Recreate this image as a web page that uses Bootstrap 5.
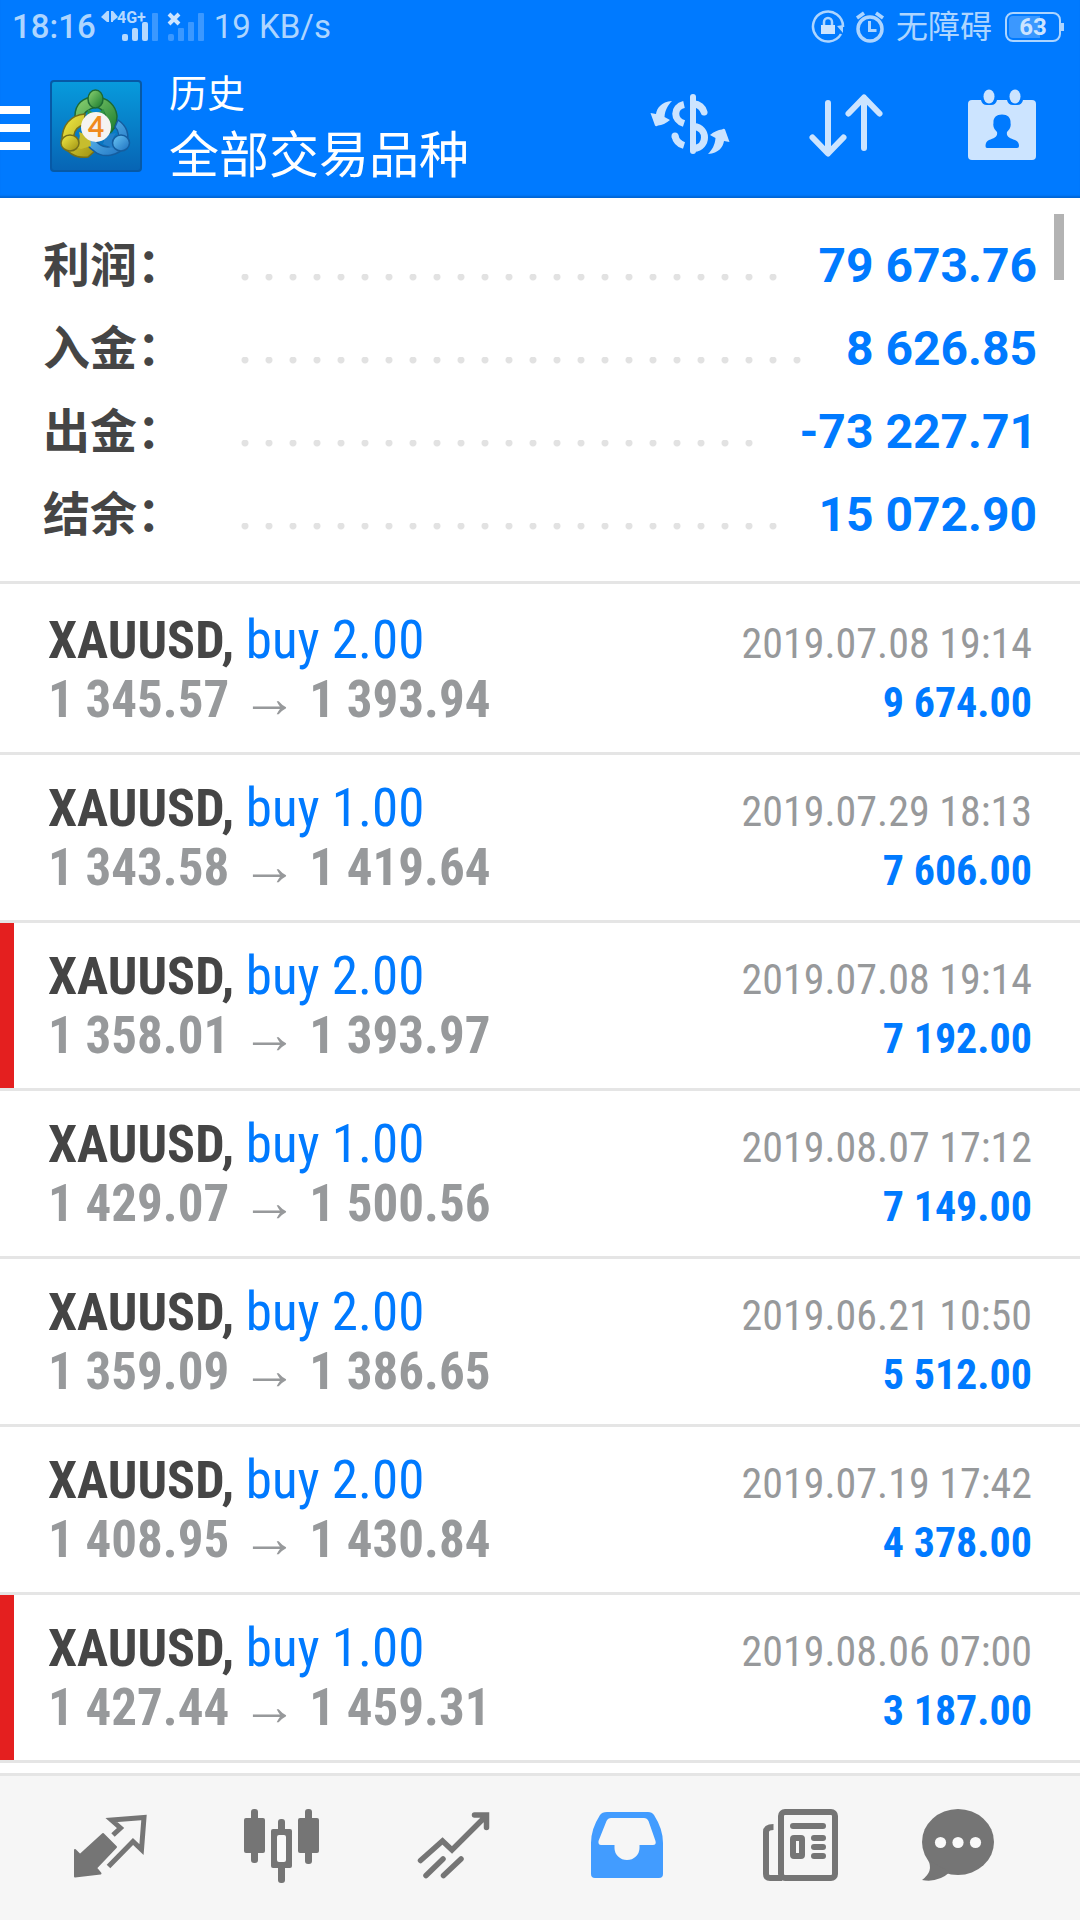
<!DOCTYPE html>
<html lang="zh-CN">
<head>
<meta charset="utf-8">
<meta name="viewport" content="width=device-width, initial-scale=1">
<title>历史</title>
<link href="https://cdn.jsdelivr.net/npm/bootstrap@5.3.0/dist/css/bootstrap.min.css" rel="stylesheet">
<style>
:root { --app-blue: #007aff; --line: #e5e5e5; --ink: #454545; --muted: #97999b; }
body { font-family: Roboto, "Noto Sans CJK SC", sans-serif; background: #fff; }
svg { display: block; }
.app { height: 100vh; }
.top-area { background: var(--app-blue); box-shadow: inset 0 -3px 2px -1px #0066d6; color: #fff; }
.status { height: 54px; color: #add5ff; font-size: 33px; line-height: 54px; padding: 0 16px 0 12px; }
.status .net { line-height: 52px; margin-left: 8px; }
.status .mode { font-size: 32px; line-height: 52px; margin: 0 13px 0 9px; }
.cell-text { font: 700 16px Roboto, sans-serif; }
.battery { width: 56px; height: 30px; border: 2px solid #add5ff; border-radius: 8px; font-size: 24px; line-height: 26px; font-weight: 700; background: linear-gradient(90deg, #3b98ff 64%, transparent 64%) content-box; padding: 2px; color: #cce4ff; }
.battery span { display: block; margin-top: -2px; }
.battery-tip { width: 3px; height: 8px; background: #add5ff; }
.app-bar { height: 144px; }
.menu-btn { width: 30px; height: 44px; margin-top: 4px; }
.menu-btn i { height: 8px; background: #fff; }
.bare { background: none; border: 0; padding: 0; }
.logo { margin-left: 20px; }
.title-box { line-height: 1; padding-top: 15px; margin-left: 27px; }
.title-sub { font-size: 38px; line-height: 50px; }
.title-main { font-size: 50px; line-height: 74px; }
.tool { width: 156px; height: 144px; }
.summary { padding: 26px 43px 25px; border-bottom: 3px solid var(--line); }
.sum-row { height: 83px; line-height: 83px; }
.sum-row dt { width: 190px; font-size: 47px; font-weight: 700; color: var(--ink); }
.sum-row dd { margin: 0; font-size: 48px; font-weight: 700; color: var(--app-blue); }
.dots { height: 7px; margin: 24px 32px 0 0; background: radial-gradient(circle at 12px 3px, #e2e2e2 3px, transparent 4px) 0 0 / 24px 7px repeat-x; }
.scroll-thumb { width: 10px; height: 66px; top: 16px; right: 16px; background: #b3b3b3; }
.deals { padding-top: 3px; font-family: "Roboto Condensed", Roboto, sans-serif; }
.deal { padding: 24px 48px 23px; border-bottom: 3px solid var(--line); line-height: 59px; }
.deal.flagged { box-shadow: inset 14px 0 0 #e41f1f; }
.deal-line { height: 59px; }
.sym { font-size: 52px; font-weight: 700; color: var(--ink); margin-right: 8px; }
.side { font-size: 53px; color: var(--app-blue); }
.price { font-size: 51px; font-weight: 700; color: var(--muted); }
.arrow { font: 700 56px/1 "Liberation Sans", sans-serif; margin: 0 12px; color: var(--muted); }
.when { font-size: 42px; color: var(--muted); }
.gain { font-size: 42px; font-weight: 700; color: var(--app-blue); }
.tabs { height: 147px; border-top: 3px solid var(--line); background: #f6f6f6; padding: 0 24px; color: #757575; }
.tabs a { color: inherit; }
.tabs a.active { color: #429cff; }
.tabs svg { width: 100%; height: 144px; }
</style>
<script src="https://cdn.jsdelivr.net/npm/bootstrap@5.3.0/dist/js/bootstrap.bundle.min.js"></script>
</head>
<body>
<div class="app d-flex flex-column overflow-hidden">
  <header class="top-area flex-shrink-0">
    <div class="status d-flex align-items-center">
      <span class="fw-medium">18:16</span>
      <svg width="110" height="54" viewBox="96 0 110 54" fill="#b5d9ff">
        <path d="M101 17l6-6v6h0v5zM107 11h2v11h-2zM111 11h2v11h-2zM113 11l5 6-5 4z"/>
        <text class="cell-text" x="117" y="23">4G+</text>
        <rect x="122" y="34" width="6" height="7" rx="2"/><rect x="132" y="28" width="6" height="13" rx="2"/><rect x="142" y="22" width="6" height="19" rx="2"/>
        <g fill="#3b98ff"><rect x="152" y="13" width="6" height="28" rx="1"/><rect x="168" y="34" width="6" height="7" rx="2"/><rect x="178" y="28" width="6" height="13" rx="1"/><rect x="188" y="22" width="6" height="19" rx="1"/><rect x="198" y="13" width="6" height="28" rx="1"/></g>
        <path d="M169 14l10 10M179 14l-10 10" stroke="#cce4ff" stroke-width="4"/>
      </svg>
      <span class="net">19 KB/s</span>
      <svg class="ms-auto" width="76" height="54" viewBox="811 0 76 54" fill="none" stroke="#add5ff">
        <path d="M841 34a15 15 0 1 1 2-7" stroke-width="2.500"/>
        <path d="M837 26l6-1v8z" fill="#add5ff" stroke="none"/>
        <rect x="821" y="25" width="14" height="9" fill="#cce4ff" stroke="none"/><path d="M824 25v-3a4 4 0 0 1 8 0v3" stroke-width="2.5"/>
        <circle cx="870" cy="29" r="12" stroke-width="3.5"/><path d="M869.500 21v9.500h7" stroke-width="3"/>
        <path d="M857 18l7-5M883 18l-7-5" stroke-width="3.500"/>
      </svg>
      <span class="mode">无障碍</span>
      <div class="battery text-center"><span>63</span></div><i class="battery-tip"></i>
    </div>
    <div class="app-bar d-flex align-items-center">
      <button class="menu-btn bare d-flex flex-column justify-content-between" aria-label="菜单"><i class="w-100"></i><i class="w-100"></i><i class="w-100"></i></button>
      <svg class="logo flex-shrink-0" width="92" height="92" viewBox="0 0 92 92">
        <defs>
          <linearGradient id="bg" x2="0" y2="1"><stop stop-color="#079bdd"/><stop offset="1" stop-color="#0764b4"/></linearGradient>
          <linearGradient id="gr" x2="1" y2="1"><stop stop-color="#8fd473"/><stop offset="1" stop-color="#15782c"/></linearGradient>
          <linearGradient id="ye" x2="1" y2="1"><stop stop-color="#f4ec45"/><stop offset="1" stop-color="#9c8f12"/></linearGradient>
          <linearGradient id="bl" x2="1" y2="1"><stop stop-color="#6cc8f5"/><stop offset="1" stop-color="#1b6fc0"/></linearGradient>
        </defs>
        <rect x="1" y="1" width="90" height="90" rx="3" fill="url(#bg)" stroke="#0659a6" stroke-width="2"/>
        <g stroke-width="1.500">
          <path d="M25 36C25 24 33 17 45 17C58 17 66 26 67 36C67 46 63 52 57 55L54 48C59 40 55 29 46 27C38 29 33 33 32 39L25 41Z" fill="url(#gr)" stroke="#1d6a34"/>
          <path d="M35 34C20 35 12 46 12 60C14 72 26 79 38 77L46 70L40 64C30 69 22 64 24 55C25 49 29 46 34 45Z" fill="url(#ye)" stroke="#746f1a"/>
          <path d="M68 40C77 46 80 55 76 66C68 76 53 79 44 71C38 68 37 63 37 59L46 61C52 68 60 69 66 63C70 57 69 51 65 47Z" fill="url(#bl)" stroke="#155d9f"/>
          <path d="M38 29Q45 36 54 29L55 37H37Z" fill="#2f9445" stroke="none"/>
          <path d="M24 66Q32 60 29 52L40 56L41 66L31 69Z" fill="#c7bd2e" stroke="none"/>
          <path d="M65 69Q60 60 66 53L56 55L53 64Z" fill="#237fc9" stroke="none"/>
          <ellipse cx="45.500" cy="19" rx="7.500" ry="9" fill="url(#gr)" stroke="#1d6a34"/>
          <ellipse cx="20" cy="63" rx="9" ry="8" fill="url(#ye)" stroke="#746f1a"/>
          <ellipse cx="71" cy="63" rx="8.500" ry="8" fill="url(#bl)" stroke="#155d9f"/>
        </g>
        <circle cx="46" cy="47" r="15" fill="#f5f3f2"/>
        <text x="46" y="57" text-anchor="middle" font-family="Lato, sans-serif" font-weight="700" font-size="28" fill="#f08a1c">4</text>
      </svg>
      <div class="title-box align-self-start">
        <div class="title-sub">历史</div>
        <h1 class="title-main fw-normal m-0">全部交易品种</h1>
      </div>
      <div class="d-flex ms-auto">
        <button class="tool bare" aria-label="货币"><svg viewBox="612 54 156 144" width="156" height="144" fill="#cce4ff">
          <path d="M693 97v54" stroke="#cce4ff" stroke-width="6" stroke-linecap="round"/>
          <g fill="none" stroke="#cce4ff" stroke-width="7"><path d="M684 104.500C673 107 673 120 684 123.500"/><path d="M675 136C676 141 679 144 684 145.500" /><path d="M694 104C699 104 703 108 704 112" stroke-linecap="round"/><path d="M694 126.500C708 128 708 147 694 148.500"/></g>
          <circle cx="675" cy="136" r="3.500"/>
          <path id="swoop" d="M672 101C661 102 657 108 656 114L650.500 113L655 125.500Q656 127 658 125.500Q664 125 670 120L664.500 117C665 110 668 105 672 101Z"/>
          <use href="#swoop" transform="rotate(180 690 127.500)"/>
        </svg></button>
        <button class="tool bare" aria-label="排序"><svg viewBox="768 54 156 144" width="156" height="144" fill="none" stroke="#cce4ff" stroke-width="6" stroke-linecap="round" stroke-linejoin="round"><path d="M828 103v50M812.500 137.500L828 153.500L843.500 137.500M864 148V98M848.500 113.500L864 97.500L879.500 113.500"/></svg></button>
        <button class="tool bare" aria-label="日期"><svg viewBox="924 54 156 144" width="156" height="144" fill="#cce4ff">
          <rect x="968" y="100" width="68" height="60" rx="4"/>
          <path d="M981 98v2q1 5 6 5h4q5 0 6-5v-2zM1007 98v2q1 5 6 5h4q5 0 6-5v-2z" fill="#007aff"/>
          <ellipse cx="989" cy="96.500" rx="5.500" ry="7"/><ellipse cx="1015" cy="96.500" rx="5.500" ry="7"/>
          <path d="M1002 114.500C1008 114.500 1011 118 1010.500 123C1011.500 127 1009 130 1007 132C1006 137 1010 138 1015 140Q1019 141.500 1019 146Q1019 148 1017 148H987Q985.500 148 985.500 146Q985.500 141.500 989 140C994 138 998 137 997 132C995 130 992.500 127 993.500 123C993 118 996 114.500 1002 114.500Z" fill="#007aff"/>
        </svg></button>
      </div>
    </div>
  </header>

  <main class="flex-grow-1 overflow-hidden position-relative">
    <dl class="summary m-0">
      <div class="sum-row d-flex align-items-center"><dt>利润：</dt><div class="dots flex-grow-1"></div><dd>79 673.76</dd></div>
      <div class="sum-row d-flex align-items-center"><dt>入金：</dt><div class="dots flex-grow-1"></div><dd>8 626.85</dd></div>
      <div class="sum-row d-flex align-items-center"><dt>出金：</dt><div class="dots flex-grow-1"></div><dd>-73 227.71</dd></div>
      <div class="sum-row d-flex align-items-center"><dt>结余：</dt><div class="dots flex-grow-1"></div><dd>15 072.90</dd></div>
    </dl>
    <div class="scroll-thumb position-absolute"></div>
    <ul class="deals list-unstyled m-0">
      <li class="deal">
        <div class="deal-line d-flex justify-content-between align-items-baseline"><div><span class="sym">XAUUSD,</span> <span class="side">buy 2.00</span></div><time class="when">2019.07.08 19:14</time></div>
        <div class="deal-line d-flex justify-content-between align-items-baseline"><div class="price">1 345.57<span class="arrow">→</span>1 393.94</div><span class="gain">9 674.00</span></div>
      </li>
      <li class="deal">
        <div class="deal-line d-flex justify-content-between align-items-baseline"><div><span class="sym">XAUUSD,</span> <span class="side">buy 1.00</span></div><time class="when">2019.07.29 18:13</time></div>
        <div class="deal-line d-flex justify-content-between align-items-baseline"><div class="price">1 343.58<span class="arrow">→</span>1 419.64</div><span class="gain">7 606.00</span></div>
      </li>
      <li class="deal flagged">
        <div class="deal-line d-flex justify-content-between align-items-baseline"><div><span class="sym">XAUUSD,</span> <span class="side">buy 2.00</span></div><time class="when">2019.07.08 19:14</time></div>
        <div class="deal-line d-flex justify-content-between align-items-baseline"><div class="price">1 358.01<span class="arrow">→</span>1 393.97</div><span class="gain">7 192.00</span></div>
      </li>
      <li class="deal">
        <div class="deal-line d-flex justify-content-between align-items-baseline"><div><span class="sym">XAUUSD,</span> <span class="side">buy 1.00</span></div><time class="when">2019.08.07 17:12</time></div>
        <div class="deal-line d-flex justify-content-between align-items-baseline"><div class="price">1 429.07<span class="arrow">→</span>1 500.56</div><span class="gain">7 149.00</span></div>
      </li>
      <li class="deal">
        <div class="deal-line d-flex justify-content-between align-items-baseline"><div><span class="sym">XAUUSD,</span> <span class="side">buy 2.00</span></div><time class="when">2019.06.21 10:50</time></div>
        <div class="deal-line d-flex justify-content-between align-items-baseline"><div class="price">1 359.09<span class="arrow">→</span>1 386.65</div><span class="gain">5 512.00</span></div>
      </li>
      <li class="deal">
        <div class="deal-line d-flex justify-content-between align-items-baseline"><div><span class="sym">XAUUSD,</span> <span class="side">buy 2.00</span></div><time class="when">2019.07.19 17:42</time></div>
        <div class="deal-line d-flex justify-content-between align-items-baseline"><div class="price">1 408.95<span class="arrow">→</span>1 430.84</div><span class="gain">4 378.00</span></div>
      </li>
      <li class="deal flagged">
        <div class="deal-line d-flex justify-content-between align-items-baseline"><div><span class="sym">XAUUSD,</span> <span class="side">buy 1.00</span></div><time class="when">2019.08.06 07:00</time></div>
        <div class="deal-line d-flex justify-content-between align-items-baseline"><div class="price">1 427.44<span class="arrow">→</span>1 459.31</div><span class="gain">3 187.00</span></div>
      </li>
    </ul>
  </main>

  <nav class="tabs nav nav-fill flex-nowrap flex-shrink-0">
    <a href="#quotes" class="col" aria-label="行情"><svg viewBox="24 1776 172 144"><path d="M75 1850l5 5 23-21 13 13-20 21 4.500 5.500-25.500 3z" fill="currentColor" stroke="currentColor" stroke-width="2" stroke-linejoin="round"/><path d="M113 1835l7.500-7-9-8 32.500-2.500-2.500 32-8.500-8-24.500 25" fill="none" stroke="currentColor" stroke-width="5"/></svg></a>
    <a href="#charts" class="col" aria-label="图表"><svg viewBox="196 1776 172 144" fill="currentColor"><rect x="244" y="1818" width="21" height="35" rx="2"/><rect x="251" y="1809" width="7" height="54" rx="3"/><rect x="298" y="1818" width="21" height="35" rx="2"/><rect x="305" y="1809" width="7" height="55" rx="3"/><rect x="278" y="1819" width="7" height="64" rx="3"/><rect x="271" y="1829" width="21" height="39" rx="2"/><rect x="277" y="1835" width="9" height="27" rx="2" fill="#f9f9f9"/></svg></a>
    <a href="#trade" class="col" aria-label="交易"><svg viewBox="368 1776 172 144" fill="none" stroke="currentColor" stroke-width="5.500" stroke-linecap="round"><path d="M420.500 1860.500L442.500 1841L452 1850L486 1816M474.500 1815H486.500V1827.500M426 1875.500L443 1859M443.500 1875.500L461 1859"/></svg></a>
    <a href="#history" class="col active" aria-label="历史" aria-current="page"><svg viewBox="540 1776 172 144" fill="currentColor"><path fill-rule="evenodd" d="M607 1812H648Q652 1812 654 1815Q663 1829 663 1843V1874Q663 1878 659 1878H595Q591 1878 591 1874V1843Q591 1829 600 1815Q602 1812 607 1812ZM611 1818Q608 1818 606.500 1821L598.500 1841Q598 1845 601 1845H614.500V1848A12.500 12 0 0 0 639.500 1848V1845H653Q656.500 1845 655.500 1841L648.500 1821Q647 1818 644 1818Z"/></svg></a>
    <a href="#news" class="col" aria-label="新闻"><svg viewBox="712 1776 172 144" fill="currentColor"><g fill="none" stroke="currentColor" stroke-width="6"><rect x="781" y="1812" width="54" height="66" rx="4"/><path d="M773.500 1827Q766 1827 766 1832V1874Q766 1878 770 1878H782"/><rect x="793" y="1838" width="9" height="18" rx="1"/></g><rect x="790" y="1823" width="36" height="6" rx="3"/><rect x="811" y="1835" width="15" height="6" rx="3"/><rect x="811" y="1844" width="15" height="6" rx="3"/><rect x="811" y="1853" width="15" height="6" rx="3"/></svg></a>
    <a href="#chat" class="col" aria-label="消息"><svg viewBox="884 1776 172 144" fill="currentColor"><ellipse cx="958" cy="1842" rx="36" ry="33"/><path d="M928 1860Q934 1871 922 1880Q938 1883 950 1872Z"/><g fill="#f9f9f9"><circle cx="940.500" cy="1842.500" r="5.600"/><circle cx="958" cy="1842.500" r="5.600"/><circle cx="975.500" cy="1842.500" r="5.600"/></g></svg></a>
  </nav>
</div>
</body>
</html>
